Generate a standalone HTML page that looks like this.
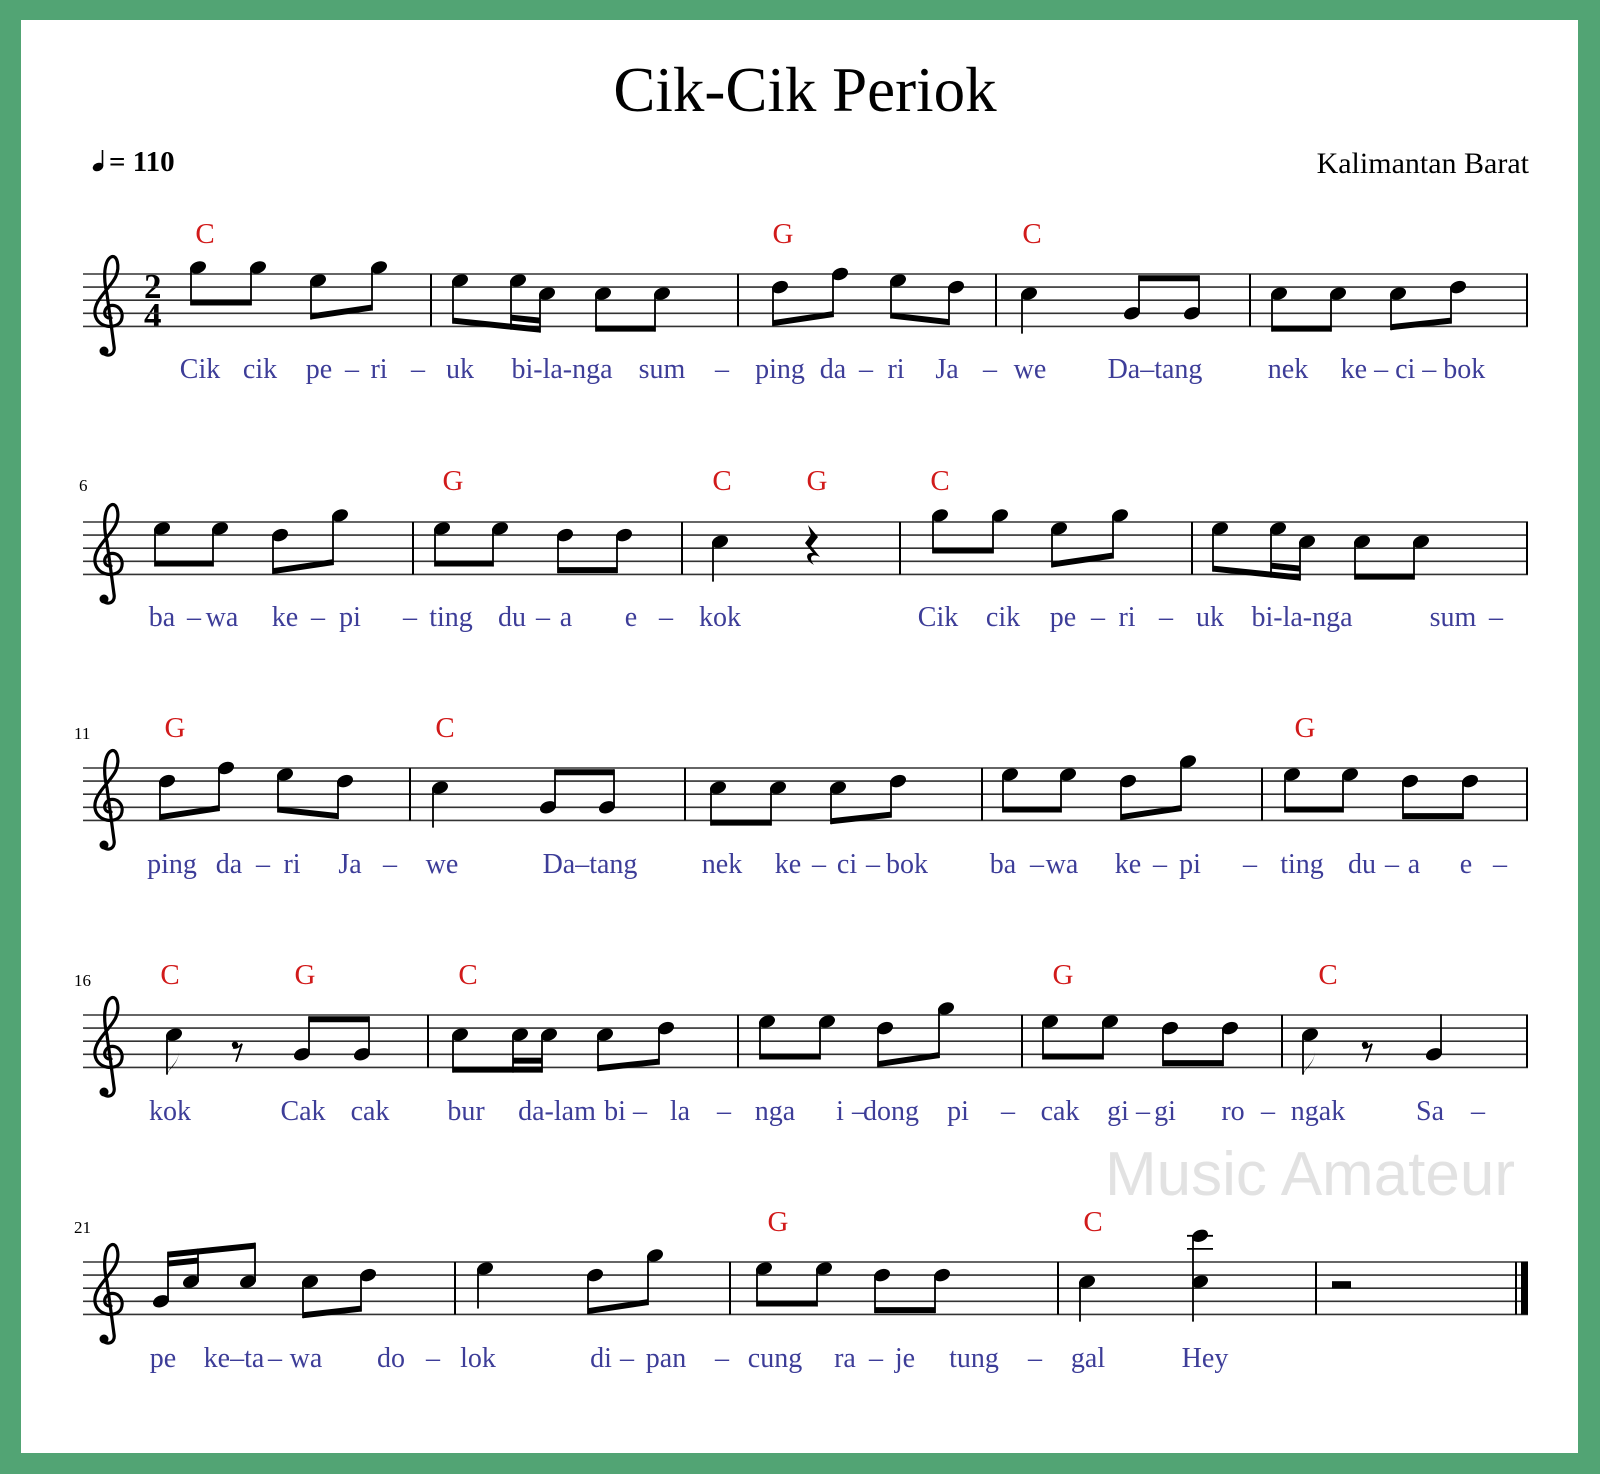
<!DOCTYPE html>
<html><head><meta charset="utf-8">
<style>
html,body{margin:0;padding:0;background:#52a474;}
#pg{position:absolute;left:21px;top:20px;width:1557px;height:1433px;background:#fff;}
svg{position:absolute;left:0;top:0;}
.t{font-family:"Liberation Serif",serif;}
.ch{font-family:"Liberation Serif",serif;font-size:29px;fill:#d11a1a;text-anchor:middle;}
.ly{font-family:"Liberation Serif",serif;font-size:28px;fill:#3d3d98;text-anchor:middle;}
.mn{font-family:"Liberation Serif",serif;font-size:17px;fill:#000;}
</style></head><body>
<div id="pg"></div>
<svg id="s" width="1600" height="1474" viewBox="0 0 1600 1474" xmlns="http://www.w3.org/2000/svg">
<rect x="21" y="20" width="1557" height="1433" fill="#fff"/>
<text class="t" x="805" y="111" font-size="63" text-anchor="middle">Cik-Cik Periok</text>
<ellipse cx="98" cy="167" rx="5.5" ry="4" transform="rotate(-22 98 167)" fill="#000"/>
<line x1="102.5" x2="102.5" y1="166" y2="150" stroke="#000" stroke-width="1.6"/>
<text class="t" x="109" y="171" font-size="29" font-weight="bold">= 110</text>
<text class="t" x="1529" y="173" font-size="30" text-anchor="end">Kalimantan Barat</text>
<text x="1310" y="1195" font-family="Liberation Sans,sans-serif" font-size="62" fill="#e2e2e2" text-anchor="middle">Music Amateur</text>
<text class="t" x="144" y="298" font-size="35" font-weight="bold">2</text>
<text class="t" x="144" y="327" font-size="35" font-weight="bold">4</text>
<text class="mn" x="79" y="491">6</text>
<text class="mn" x="74" y="739">11</text>
<text class="mn" x="74" y="986">16</text>
<text class="mn" x="74" y="1233">21</text>
<text class="ch" x="205" y="243">C</text><text class="ch" x="783" y="243">G</text><text class="ch" x="1032" y="243">C</text>
<text class="ch" x="453" y="490">G</text><text class="ch" x="722" y="490">C</text><text class="ch" x="817" y="490">G</text><text class="ch" x="940" y="490">C</text>
<text class="ch" x="175" y="737">G</text><text class="ch" x="445" y="737">C</text><text class="ch" x="1305" y="737">G</text>
<text class="ch" x="170" y="984">C</text><text class="ch" x="305" y="984">G</text><text class="ch" x="468" y="984">C</text><text class="ch" x="1063" y="984">G</text><text class="ch" x="1328" y="984">C</text>
<text class="ch" x="778" y="1231">G</text><text class="ch" x="1093" y="1231">C</text>
<g class="ly">
<text x="200" y="378">Cik</text><text x="260" y="378">cik</text><text x="319" y="378">pe</text><text x="352" y="378">–</text><text x="379" y="378">ri</text><text x="418" y="378">–</text><text x="460" y="378">uk</text><text x="562" y="378">bi-la-nga</text><text x="662" y="378">sum</text><text x="722" y="378">–</text><text x="780" y="378">ping</text><text x="833" y="378">da</text><text x="866" y="378">–</text><text x="896" y="378">ri</text><text x="947" y="378">Ja</text><text x="990" y="378">–</text><text x="1030" y="378">we</text><text x="1155" y="378">Da–tang</text><text x="1288" y="378">nek</text><text x="1413" y="378">ke – ci – bok</text>
<text x="162" y="626">ba</text><text x="194" y="626">–</text><text x="222" y="626">wa</text><text x="285" y="626">ke</text><text x="318" y="626">–</text><text x="350" y="626">pi</text><text x="410" y="626">–</text><text x="451" y="626">ting</text><text x="512" y="626">du</text><text x="543" y="626">–</text><text x="566" y="626">a</text><text x="631" y="626">e</text><text x="666" y="626">–</text><text x="720" y="626">kok</text><text x="938" y="626">Cik</text><text x="1003" y="626">cik</text><text x="1063" y="626">pe</text><text x="1098" y="626">–</text><text x="1127" y="626">ri</text><text x="1166" y="626">–</text><text x="1210" y="626">uk</text><text x="1302" y="626">bi-la-nga</text><text x="1453" y="626">sum</text><text x="1496" y="626">–</text>
<text x="172" y="873">ping</text><text x="229" y="873">da</text><text x="263" y="873">–</text><text x="292" y="873">ri</text><text x="350" y="873">Ja</text><text x="390" y="873">–</text><text x="442" y="873">we</text><text x="590" y="873">Da–tang</text><text x="722" y="873">nek</text><text x="788" y="873">ke</text><text x="819" y="873">–</text><text x="847" y="873">ci</text><text x="873" y="873">–</text><text x="907" y="873">bok</text><text x="1003" y="873">ba</text><text x="1037" y="873">–</text><text x="1062" y="873">wa</text><text x="1128" y="873">ke</text><text x="1160" y="873">–</text><text x="1190" y="873">pi</text><text x="1250" y="873">–</text><text x="1302" y="873">ting</text><text x="1362" y="873">du</text><text x="1392" y="873">–</text><text x="1414" y="873">a</text><text x="1466" y="873">e</text><text x="1500" y="873">–</text>
<text x="170" y="1120">kok</text><text x="303" y="1120">Cak</text><text x="370" y="1120">cak</text><text x="466" y="1120">bur</text><text x="557" y="1120">da-lam</text><text x="615" y="1120">bi</text><text x="640" y="1120">–</text><text x="680" y="1120">la</text><text x="724" y="1120">–</text><text x="775" y="1120">nga</text><text x="840" y="1120">i</text><text x="859" y="1120">–</text><text x="891" y="1120">dong</text><text x="958" y="1120">pi</text><text x="1008" y="1120">–</text><text x="1060" y="1120">cak</text><text x="1118" y="1120">gi</text><text x="1143" y="1120">–</text><text x="1165" y="1120">gi</text><text x="1233" y="1120">ro</text><text x="1268" y="1120">–</text><text x="1318" y="1120">ngak</text><text x="1430" y="1120">Sa</text><text x="1478" y="1120">–</text>
<text x="163" y="1367">pe</text><text x="234" y="1367">ke–ta</text><text x="275" y="1367">–</text><text x="306" y="1367">wa</text><text x="391" y="1367">do</text><text x="433" y="1367">–</text><text x="478" y="1367">lok</text><text x="601" y="1367">di</text><text x="627" y="1367">–</text><text x="666" y="1367">pan</text><text x="722" y="1367">–</text><text x="775" y="1367">cung</text><text x="845" y="1367">ra</text><text x="876" y="1367">–</text><text x="905" y="1367">je</text><text x="974" y="1367">tung</text><text x="1035" y="1367">–</text><text x="1088" y="1367">gal</text><text x="1205" y="1367">Hey</text>
</g>
<g id="mus"></g>
</svg>
<script>
var g=document.getElementById('mus'),NS='http://www.w3.org/2000/svg';
function el(n,a){var e=document.createElementNS(NS,n);for(var k in a)e.setAttribute(k,a[k]);g.appendChild(e);return e;}
var SP=13.1;
var P={c6:-4,a5:-2,g5:-1,f5:0,e5:1,d5:2,c5:3,b4:4,a4:5,g4:6};
function py(t,p){return t+P[p]*SP/2;}
function head(x,y){el('ellipse',{cx:x,cy:y,rx:8.3,ry:5.8,transform:'rotate(-22 '+x+' '+y+')',fill:'#000'});}
function staff(t,bars,fin){
 for(var i=0;i<5;i++)el('line',{x1:83,x2:1528,y1:t+i*SP,y2:t+i*SP,stroke:'#333','stroke-width':1.6});
 bars.forEach(function(b){el('line',{x1:b,x2:b,y1:t,y2:t+4*SP,stroke:'#000','stroke-width':2});});
 if(fin){el('line',{x1:1516,x2:1516,y1:t,y2:t+4*SP,stroke:'#000','stroke-width':2});el('rect',{x:1521,y:t,width:7,height:4*SP,fill:'#000'});}
 else el('line',{x1:1527,x2:1527,y1:t,y2:t+4*SP,stroke:'#000','stroke-width':2});
 var cx=105;
 el('path',{d:'M'+(cx+6)+','+(t+44)+' C'+(cx-1)+','+(t+45)+' '+(cx-3)+','+(t+36)+' '+(cx+4)+','+(t+32)+' C'+(cx+13)+','+(t+29)+' '+(cx+20)+','+(t+38)+' '+(cx+16)+','+(t+47)+' C'+(cx+11)+','+(t+56)+' '+(cx-8)+','+(t+54)+' '+(cx-10)+','+(t+40)+' C'+(cx-12)+','+(t+26)+' '+(cx+6)+','+(t+14)+' '+(cx+11)+','+(t+2)+' C'+(cx+15)+','+(t-8)+' '+(cx+12)+','+(t-20)+' '+(cx+6)+','+(t-17)+' C'+(cx-1)+','+(t-13)+' '+(cx-2)+','+(t+4)+' '+(cx+2)+','+(t+20)+' L'+(cx+9)+','+(t+72)+' C'+(cx+11)+','+(t+82)+' '+(cx)+','+(t+84)+' '+(cx-3)+','+(t+77),fill:'none',stroke:'#000','stroke-width':3.2,'stroke-linecap':'round'});
 el('circle',{cx:cx-1,cy:t+77,r:4.5,fill:'#000'});
}
function grp(t,ns,dir,sec){
 var n=ns.length,ys=ns.map(function(a){return py(t,a[1]);});
 var xs=ns.map(function(a){return a[0]+(dir=='d'?-7:7);});
 var L=38,e0,e1;
 if(dir=='d'){e0=ys[0]+L;e1=ys[n-1]+L;var d=Math.max(-9,Math.min(9,e1-e0));var m=Math.max.apply(null,ys)+30;
  var base=Math.max(e0,e1)-Math.abs(d);e0=base;e1=base+d;if(Math.min(e0,e1)<m){var s=m-Math.min(e0,e1);e0+=s;e1+=s;}}
 else{e0=ys[0]-L;e1=ys[n-1]-L;var d=Math.max(-9,Math.min(9,e1-e0));var m=Math.min.apply(null,ys)-30;
  var base=Math.min(e0,e1)+Math.abs(d);e0=base;e1=base+d;if(Math.max(e0,e1)>m){var s=Math.max(e0,e1)-m;e0-=s;e1-=s;}}
 function by(x){return e0+(e1-e0)*(x-xs[0])/(xs[n-1]-xs[0]);}
 for(var i=0;i<n;i++){head(ns[i][0],ys[i]);el('line',{x1:xs[i],x2:xs[i],y1:ys[i],y2:by(xs[i]),stroke:'#000','stroke-width':1.8});}
 var th=6,o=dir=='d'?-th:th;
 function beam(a,b,off){var x1=xs[a],x2=xs[b];el('polygon',{points:[x1,by(x1)+off,x2,by(x2)+off,x2,by(x2)+off+o,x1,by(x1)+off+o].join(' '),fill:'#000'});}
 beam(0,n-1,0);
 if(sec)beam(sec[0],sec[1],dir=='d'?-9:9);
}
function q(t,x,p,dir,flag){var y=py(t,p);head(x,y);var sx=x+(dir=='d'?-7:7),ey=dir=='d'?y+40:y-40;el('line',{x1:sx,x2:sx,y1:y,y2:ey,stroke:'#000','stroke-width':1.8});
 if(flag)el('path',{d:'M'+sx+','+ey+' c2,-8 12,-12 12,-24 c0,6 -2,12 -10,20 z',fill:'#000'});}
function qrest(t,x){el('path',{d:'M'+(x-4)+','+(t+3)+' l10,12 l-7,9 l9,11 c-8,-4 -12,0 -6,8 c-9,-5 -9,-13 -1,-12 l-8,-10 l6,-8 z',fill:'#000'});}
function erest(t,x){var y=t+2.5*SP;el('circle',{cx:x-3,cy:y-3,r:3.2,fill:'#000'});el('path',{d:'M'+(x-5)+','+(y)+' Q'+x+','+(y+1)+' '+(x+4)+','+(y-4)+' L'+(x-2)+','+(y+14),fill:'none',stroke:'#000','stroke-width':1.8});}
var t=274;staff(t,[431,738,996,1250],false);
grp(t,[[198,'g5'],[258,'g5']],'d');grp(t,[[318,'e5'],[379,'g5']],'d');
grp(t,[[460,'e5'],[518,'e5'],[547,'c5']],'d',[1,2]);grp(t,[[603,'c5'],[662,'c5']],'d');
grp(t,[[780,'d5'],[840,'f5']],'d');grp(t,[[898,'e5'],[956,'d5']],'d');
q(t,1029,'c5','d');grp(t,[[1132,'g4'],[1192,'g4']],'u');
grp(t,[[1279,'c5'],[1338,'c5']],'d');grp(t,[[1398,'c5'],[1458,'d5']],'d');
t=522;staff(t,[413,682,900,1192],false);
grp(t,[[162,'e5'],[220,'e5']],'d');grp(t,[[280,'d5'],[340,'g5']],'d');
grp(t,[[442,'e5'],[500,'e5']],'d');grp(t,[[565,'d5'],[624,'d5']],'d');
q(t,720,'c5','d');qrest(t,812);
grp(t,[[940,'g5'],[1000,'g5']],'d');grp(t,[[1059,'e5'],[1120,'g5']],'d');
grp(t,[[1220,'e5'],[1278,'e5'],[1307,'c5']],'d',[1,2]);grp(t,[[1362,'c5'],[1421,'c5']],'d');
t=768;staff(t,[410,685,982,1262],false);
grp(t,[[167,'d5'],[226,'f5']],'d');grp(t,[[285,'e5'],[345,'d5']],'d');
q(t,440,'c5','d');grp(t,[[548,'g4'],[607,'g4']],'u');
grp(t,[[718,'c5'],[778,'c5']],'d');grp(t,[[838,'c5'],[898,'d5']],'d');
grp(t,[[1010,'e5'],[1068,'e5']],'d');grp(t,[[1128,'d5'],[1188,'g5']],'d');
grp(t,[[1292,'e5'],[1350,'e5']],'d');grp(t,[[1410,'d5'],[1470,'d5']],'d');
t=1015;staff(t,[428,738,1022,1282],false);
q(t,174,'c5','d',true);erest(t,238);grp(t,[[302,'g4'],[362,'g4']],'u');
grp(t,[[460,'c5'],[520,'c5'],[549,'c5']],'d',[1,2]);grp(t,[[605,'c5'],[666,'d5']],'d');
grp(t,[[767,'e5'],[827,'e5']],'d');grp(t,[[885,'d5'],[946,'g5']],'d');
grp(t,[[1050,'e5'],[1110,'e5']],'d');grp(t,[[1170,'d5'],[1230,'d5']],'d');
q(t,1310,'c5','d',true);erest(t,1368);q(t,1434,'g4','u');
t=1262;staff(t,[455,730,1058,1316],true);
grp(t,[[161,'g4'],[191,'c5'],[248,'c5']],'u',[0,1]);grp(t,[[310,'c5'],[368,'d5']],'d');
q(t,485,'e5','d');grp(t,[[595,'d5'],[655,'g5']],'d');
grp(t,[[764,'e5'],[824,'e5']],'d');grp(t,[[882,'d5'],[942,'d5']],'d');
q(t,1087,'c5','d');
(function(){var x=1200;el('line',{x1:x-13,x2:x+13,y1:t-SP,y2:t-SP,stroke:'#000','stroke-width':1.8});el('line',{x1:x-13,x2:x+13,y1:t-2*SP,y2:t-2*SP,stroke:'#000','stroke-width':1.8});
 head(x,py(t,'c6'));head(x,py(t,'c5'));el('line',{x1:x-7,x2:x-7,y1:py(t,'c6'),y2:py(t,'c5')+40,stroke:'#000','stroke-width':1.8});})();
el('rect',{x:1332,y:t+2*SP-7,width:19,height:7,fill:'#000'});
</script>
</body></html>
